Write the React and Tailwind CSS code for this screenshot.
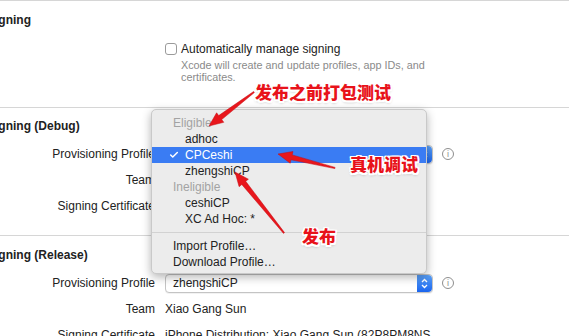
import { Check } from "lucide-react";

const LABEL_FONT = "font-['Liberation_Sans',Arial,sans-serif]";

const Stepper = () => (
  <div className="flex h-full w-[15px] items-center justify-center rounded-r-[4px] bg-gradient-to-b from-[#5aa0f7] to-[#1a64ee]">
    <svg width="7" height="11" viewBox="0 0 7 11">
      <path d="M1 4 L3.5 1.5 L6 4" fill="none" stroke="#fff" strokeWidth="1.3" />
      <path d="M1 7 L3.5 9.5 L6 7" fill="none" stroke="#fff" strokeWidth="1.3" />
    </svg>
  </div>
);

const InfoIcon = () => (
  <div className="ml-[9px] flex h-[12px] w-[12px] items-center justify-center rounded-full border border-[#8e8e8e] text-[9px] leading-none text-[#8e8e8e]">
    i
  </div>
);

const PopupButton = ({ value }) => (
  <div className="flex items-center">
    <div className="flex h-[19px] w-[268px] items-center justify-between rounded-[4px] border border-[#c4c4c4] bg-white shadow-[0_1px_0_rgba(0,0,0,0.05)]">
      <span className="pl-[7px] text-[12px] text-[#222]">{value}</span>
      <Stepper />
    </div>
    <InfoIcon />
  </div>
);

const Row = ({ label, children }) => (
  <div className="flex h-[26px] items-center">
    <div className="w-[155px] shrink-0 text-right text-[12px] text-[#222]">{label}</div>
    <div className="ml-[10px] whitespace-nowrap text-[12px] text-[#222]">{children}</div>
  </div>
);

const SectionTitle = ({ children }) => (
  <div className="ml-[-13px] flex h-[18px] items-center whitespace-nowrap text-[12px] font-bold text-[#222]">
    {children}
  </div>
);

const MenuItem = ({ children, selected, heading, indent = true }) => (
  <div
    className={`relative flex h-[16px] items-center text-[12px] ${indent ? "pl-[33px]" : "pl-[21px]"} ${
      selected ? "bg-[#3a7cf3] text-white" : heading ? "text-[#a3a3a3]" : "text-[#222]"
    }`}
  >
    {selected && <Check className="absolute left-[17px] top-[3px]" size={10} strokeWidth={3.5} />}
    {children}
  </div>
);

const Arrow = ({ x1, y1, x2, y2 }) => {
  const dx = x2 - x1;
  const dy = y2 - y1;
  const len = Math.hypot(dx, dy);
  const ux = dx / len;
  const uy = dy / len;
  const nx = -uy;
  const ny = ux;
  const headLen = 14;
  const bx = x2 - ux * headLen;
  const by = y2 - uy * headLen;
  const p = (x, y) => `${x.toFixed(1)},${y.toFixed(1)}`;
  const pts = [
    p(x1 + nx * 0.6, y1 + ny * 0.6),
    p(bx + nx * 2.5, by + ny * 2.5),
    p(bx + nx * 6, by + ny * 6),
    p(x2, y2),
    p(bx - nx * 6, by - ny * 6),
    p(bx - nx * 2.5, by - ny * 2.5),
    p(x1 - nx * 0.6, y1 - ny * 0.6),
  ].join(" ");
  return <polygon points={pts} fill="#e8161c" stroke="#c40d12" strokeWidth="0.5" />;
};

const Note = ({ className, children }) => (
  <div
    className={`absolute font-['Noto_Sans_CJK_SC',sans-serif] text-[17px] font-black leading-none text-[#e8121a] [text-shadow:1.5px_0_#fff,-1.5px_0_#fff,0_1.5px_#fff,0_-1.5px_#fff,1.5px_1.5px_#fff,-1.5px_-1.5px_#fff,1.5px_-1.5px_#fff,-1.5px_1.5px_#fff,0_2px_3px_rgba(0,0,0,0.35)] ${className}`}
  >
    {children}
  </div>
);

export default function App() {
  return (
    <div className={`relative h-[336px] w-[569px] overflow-hidden bg-white ${LABEL_FONT}`}>
      {/* Signing */}
      <section className="h-[107px] border-t border-[#d6d6d6] pt-[10px]">
        <SectionTitle>Signing</SectionTitle>
        <div className="ml-[165px] mt-[12px] flex">
          <div className="mt-[2px] h-[12px] w-[12px] rounded-[3px] border border-[#9b9b9b] bg-white" />
          <div className="ml-[4px]">
            <div className="h-[16px] text-[12px] leading-[16px] text-[#222]">Automatically manage signing</div>
            <div className="mt-[2px] w-[252px] text-[10.8px] leading-[12px] text-[#8a8a8a]">
              Xcode will create and update profiles, app IDs, and certificates.
            </div>
          </div>
        </div>
      </section>

      {/* Signing (Debug) */}
      <section className="h-[128px] border-t border-[#d6d6d6] pt-[9px]">
        <SectionTitle>Signing (Debug)</SectionTitle>
        <div className="mt-[6px]">
          <Row label="Provisioning Profile">
            <PopupButton value="CPCeshi" />
          </Row>
          <Row label="Team">Xiao Gang Sun</Row>
          <Row label="Signing Certificate">iPhone Developer: Xiao Gang Sun</Row>
        </div>
      </section>

      {/* Signing (Release) */}
      <section className="border-t border-[#d6d6d6] pt-[10px]">
        <SectionTitle>Signing (Release)</SectionTitle>
        <div className="mt-[6px]">
          <Row label="Provisioning Profile">
            <PopupButton value="zhengshiCP" />
          </Row>
          <Row label="Team">Xiao Gang Sun</Row>
          <Row label="Signing Certificate">iPhone Distribution: Xiao Gang Sun (82P8PM8NS</Row>
        </div>
      </section>

      {/* popup menu */}
      <div className="absolute left-[151px] top-[109px] h-[165px] w-[276px] rounded-[5px] border border-[#c9c9c9] bg-[#ececec] pt-[5px] shadow-[0_3px_10px_rgba(0,0,0,0.3)]">
        <MenuItem heading indent={false}>Eligible</MenuItem>
        <MenuItem>adhoc</MenuItem>
        <MenuItem selected>CPCeshi</MenuItem>
        <MenuItem>zhengshiCP</MenuItem>
        <MenuItem heading indent={false}>Ineligible</MenuItem>
        <MenuItem>ceshiCP</MenuItem>
        <MenuItem>XC Ad Hoc: *</MenuItem>
        <div className="my-[5px] h-px bg-[#d2d2d2]" />
        <MenuItem indent={false}>Import Profile…</MenuItem>
        <MenuItem indent={false}>Download Profile…</MenuItem>
      </div>

      {/* annotations */}
      <svg className="pointer-events-none absolute inset-0" width="569" height="336">
        <Arrow x1={254} y1={92} x2={209} y2={126} />
        <Arrow x1={335} y1={168} x2={278} y2={154} />
        <Arrow x1={284} y1={233} x2={235} y2={172} />
      </svg>
      <Note className="left-[255px] top-[83px]">发布之前打包测试</Note>
      <Note className="left-[350px] top-[155px]">真机调试</Note>
      <Note className="left-[302px] top-[227px]">发布</Note>
    </div>
  );
}
